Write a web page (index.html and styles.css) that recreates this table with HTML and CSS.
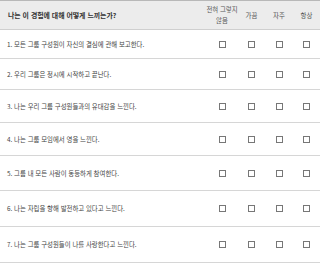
FILE: index.html
```html
<!DOCTYPE html>
<html lang="ko">
<head>
<meta charset="utf-8">
<link rel="stylesheet" href="styles.css">
</head>
<body>
<div class="survey">
  <div class="row head">
    <div class="q">나는 이 경험에 대해 어떻게 느끼는가?</div>
    <div class="c">전혀 그렇지<br>않음</div>
    <div class="c">가끔</div>
    <div class="c">자주</div>
    <div class="c">항상</div>
  </div>
  <div class="row r1">
    <div class="q">1. 모든 그룹 구성원이 자신의 결심에 관해 보고한다.</div>
    <div class="c"><span class="box"></span></div>
    <div class="c"><span class="box"></span></div>
    <div class="c"><span class="box"></span></div>
    <div class="c"><span class="box"></span></div>
  </div>
  <div class="row r2">
    <div class="q">2. 우리 그룹은 정시에 시작하고 끝난다.</div>
    <div class="c"><span class="box"></span></div>
    <div class="c"><span class="box"></span></div>
    <div class="c"><span class="box"></span></div>
    <div class="c"><span class="box"></span></div>
  </div>
  <div class="row r3">
    <div class="q">3. 나는 우리 그룹 구성원들과의 유대감을 느낀다.</div>
    <div class="c"><span class="box"></span></div>
    <div class="c"><span class="box"></span></div>
    <div class="c"><span class="box"></span></div>
    <div class="c"><span class="box"></span></div>
  </div>
  <div class="row r4">
    <div class="q">4. 나는 그룹 모임에서 영을 느낀다.</div>
    <div class="c"><span class="box"></span></div>
    <div class="c"><span class="box"></span></div>
    <div class="c"><span class="box"></span></div>
    <div class="c"><span class="box"></span></div>
  </div>
  <div class="row r5">
    <div class="q">5. 그룹 내 모든 사람이 동등하게 참여한다.</div>
    <div class="c"><span class="box"></span></div>
    <div class="c"><span class="box"></span></div>
    <div class="c"><span class="box"></span></div>
    <div class="c"><span class="box"></span></div>
  </div>
  <div class="row r6">
    <div class="q">6. 나는 자립을 향해 발전하고 있다고 느낀다.</div>
    <div class="c"><span class="box"></span></div>
    <div class="c"><span class="box"></span></div>
    <div class="c"><span class="box"></span></div>
    <div class="c"><span class="box"></span></div>
  </div>
  <div class="row r7">
    <div class="q">7. 나는 그룹 구성원들이 나를 사랑한다고 느낀다.</div>
    <div class="c"><span class="box"></span></div>
    <div class="c"><span class="box"></span></div>
    <div class="c"><span class="box"></span></div>
    <div class="c"><span class="box"></span></div>
  </div>
</div>
</body>
</html>
```

FILE: styles.css
```css
html, body {
  margin: 0;
  padding: 0;
  background: #fff;
}
body {
  font-family: "Noto Sans CJK KR", "Noto Sans", sans-serif;
  color: #444;
}
.survey {
  width: 320px;
}
.row {
  display: grid;
  grid-template-columns: 206px 32px 27px 28px 27px;
  align-items: center;
  border-bottom: 1px solid #d6d6d6;
  height: 32px;
  box-sizing: border-box;
}
.head {
  background: #ececec;
  border-top: 1px solid #b8b8b8;
  border-bottom: 1px solid #cfcfcf;
  height: 30px;
}
.head .q {
  font-size: 6.9px;
  font-weight: bold;
  color: #333;
  padding-left: 8px;
}
.head .c {
  font-size: 6.4px;
  line-height: 11px;
  color: #555;
  white-space: nowrap;
}
.q {
  padding-left: 7px;
  font-size: 6.4px;
  white-space: nowrap;
}
.c {
  text-align: center;
  display: flex;
  justify-content: center;
  align-items: center;
}
.r1 { height: 29px; }
.r2 { height: 31px; }
.r3 { height: 33px; }
.r4 { height: 33px; }
.r5 { height: 35px; }
.r6 { height: 36px; }
.r7 { height: 36px; }
.box {
  width: 5px;
  height: 5px;
  border: 1px solid #777;
  background: #fff;
}
```
